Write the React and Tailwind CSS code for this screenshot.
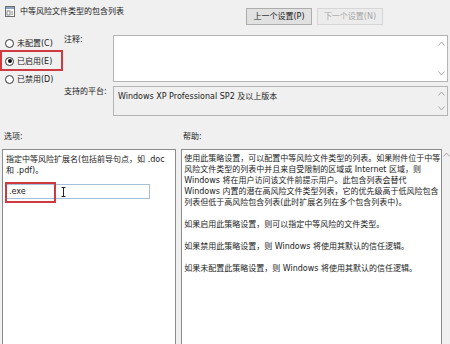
const Chevron = ({ up }) => (
  <svg width="7" height="5" viewBox="0 0 7 5" className="block">
    <path
      d={up ? "M0.5 4.5 L3.5 1 L6.5 4.5" : "M0.5 0.5 L3.5 4 L6.5 0.5"}
      fill="none"
      stroke="#a8a8a8"
      strokeWidth="1"
    />
  </svg>
);

const Radio = ({ checked, label }) => (
  <div className="flex items-center h-[18px] pl-[5px] gap-[3px]">
    <div className="w-[9px] h-[9px] rounded-full border border-[#333] bg-white flex items-center justify-center">
      {checked && <div className="w-[4px] h-[4px] rounded-full bg-[#111]"></div>}
    </div>
    <span>{label}</span>
  </div>
);

const helpLines = [
  "使用此策略设置，可以配置中等风险文件类型的列表。如果附件位于中等",
  "风险文件类型的列表中并且来自受限制的区域或 Internet 区域，则",
  "Windows 将在用户访问该文件前提示用户。此包含列表会替代",
  "Windows 内置的潜在高风险文件类型列表，它的优先级高于低风险包含",
  "列表但低于高风险包含列表(此时扩展名列在多个包含列表中)。",
  "",
  "如果启用此策略设置，则可以指定中等风险的文件类型。",
  "",
  "如果禁用此策略设置，则 Windows 将使用其默认的信任逻辑。",
  "",
  "如果未配置此策略设置，则 Windows 将使用其默认的信任逻辑。",
];

export default function App() {
  return (
    <div className="w-[450px] h-[344px] bg-[#f0f0f0] overflow-hidden relative text-[8px] leading-[11px] text-[#1a1a1a] font-['DejaVu_Sans','Noto_Sans_CJK_SC',sans-serif]">
      {/* title row */}
      <div className="flex h-[35px]">
        <div className="w-[246px] flex items-start pt-[6px] pl-[5px] gap-[5px]">
          <svg width="10" height="11" viewBox="0 0 10 11" className="block">
            <rect x="0.5" y="0.5" width="9" height="10" fill="#fff" stroke="#6d6d6d" />
            <rect x="1" y="1" width="8" height="2" fill="#8aa4c4" />
            <rect x="2" y="5" width="3" height="4" fill="none" stroke="#6d6d6d" strokeWidth="0.8" />
            <line x1="6" y1="6" x2="8" y2="6" stroke="#6d6d6d" strokeWidth="0.8" />
            <line x1="6" y1="8" x2="8" y2="8" stroke="#6d6d6d" strokeWidth="0.8" />
          </svg>
          <span className="whitespace-nowrap">中等风险文件类型的包含列表</span>
        </div>
        <div className="flex gap-[5px] pt-[8px]">
          <div className="w-[66px] h-[17px] border border-[#adadad] bg-[#e1e1e1] flex items-center justify-center whitespace-nowrap">
            上一个设置(P)
          </div>
          <div className="w-[66px] h-[17px] border border-[#d6d6d6] bg-[#ececec] text-[#a6a6a6] flex items-center justify-center whitespace-nowrap">
            下一个设置(N)
          </div>
        </div>
      </div>

      {/* state / comment / platform */}
      <div className="flex h-[89px]">
        <div className="w-[64px] flex flex-col -mt-[1px] relative">
          <Radio label="未配置(C)" />
          <Radio checked label="已启用(E)" />
          <Radio label="已禁用(D)" />
          <div className="absolute left-0 top-[16px] w-[63px] h-[21px] border-2 border-[#cf3a40]"></div>
        </div>
        <div className="w-[49px] flex flex-col">
          <div className="h-[52px] leading-[9px]">注释:</div>
          <div className="leading-[9px]">支持的平台:</div>
        </div>
        <div className="flex-1 flex flex-col gap-[4px] pr-[2px]">
          <div className="h-[47px] border border-[#b4b4b4] bg-white flex justify-end">
            <div className="w-[12px] flex flex-col justify-between items-center py-[5px]">
              <Chevron up />
              <Chevron />
            </div>
          </div>
          <div className="h-[30px] border border-[#b4b4b4] bg-[#f0f0f0] flex">
            <div className="flex-1 pl-[4px] pt-[4px] whitespace-nowrap">
              Windows XP Professional SP2 及以上版本
            </div>
            <div className="w-[12px] flex flex-col justify-between items-center py-[4px]">
              <Chevron up />
              <Chevron />
            </div>
          </div>
        </div>
      </div>

      {/* section labels */}
      <div className="flex h-[25px] items-center">
        <div className="w-[183px] pl-[4px]">选项:</div>
        <div>帮助:</div>
      </div>

      {/* panels */}
      <div className="flex pl-[2px] h-[200px]">
        <div className="w-[175px] mr-[5px] border border-[#8c8c8c] bg-white pt-[4px] pl-[3px]">
          <div className="whitespace-nowrap">指定中等风险扩展名(包括前导句点，如 .doc</div>
          <div className="whitespace-nowrap">和 .pdf)。</div>
          <div className="relative mt-[8px] w-[144px] h-[15px] border border-[#a8bfd9] bg-white flex items-center pl-[2px]">
            <span>.exe</span>
            <div className="absolute left-[-2px] top-[-3px] w-[51px] h-[21px] border-2 border-[#cf3a40]"></div>
            <svg width="5" height="10" viewBox="0 0 5 10" className="absolute left-[54px] top-[2px]">
              <path d="M0.5 0.5 H4.5 M2.5 0.5 V9.5 M0.5 9.5 H4.5" fill="none" stroke="#222" strokeWidth="1" />
            </svg>
          </div>
        </div>
        <div className="w-[262px] border border-[#8c8c8c] bg-white pt-[3px] pl-[2px]">
          {helpLines.map((line, i) => (
            <div key={i} className="h-[11px] whitespace-nowrap">
              {line}
            </div>
          ))}
        </div>
        <div className="w-[8px] shrink-0 pt-[3px] pl-[1px]">
          <Chevron up />
        </div>
      </div>
    </div>
  );
}
